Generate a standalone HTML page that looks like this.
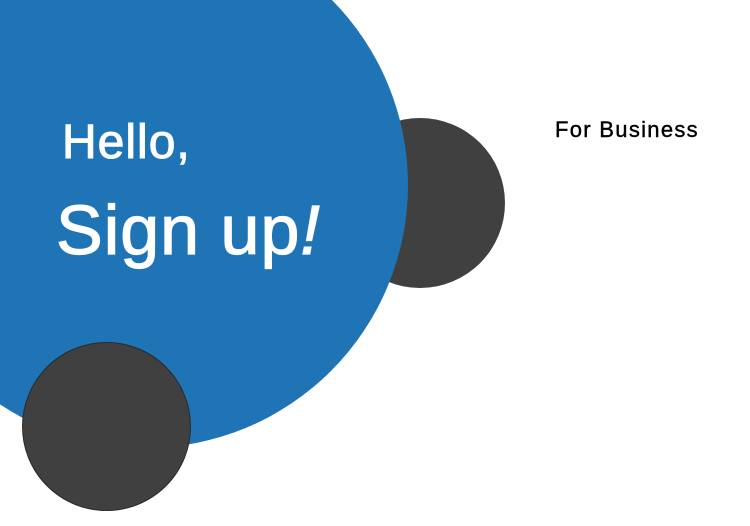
<!DOCTYPE html>
<html><head><style>
html,body{margin:0;padding:0;width:750px;height:526px;overflow:hidden;background:#fff;font-family:"Liberation Sans",sans-serif;}
.c{position:absolute;border-radius:50%;}
</style></head><body>
<div class="c" style="left:335px;top:118px;width:170px;height:170px;background:#404040;"></div>
<div class="c" style="left:-118px;top:-78px;width:526px;height:526px;background:#1f74b5;"></div>
<div class="c" style="left:22px;top:342px;width:169px;height:169px;background:#404040;border:1px solid #2a2a2a;box-sizing:border-box;"></div>
<div style="position:absolute;left:62px;top:115px;color:#fff;font-size:48px;line-height:56px;letter-spacing:1px;-webkit-text-stroke:1px #fff;">Hello,</div>
<div style="position:absolute;left:56px;top:191px;color:#fff;font-size:70px;line-height:78px;letter-spacing:1px;-webkit-text-stroke:1.2px #fff;">Sign up<i>!</i></div>
<div style="position:absolute;left:555px;top:116px;color:#000;font-size:22px;line-height:28px;letter-spacing:1.3px;-webkit-text-stroke:0.4px #000;">For Business</div>
</body></html>
